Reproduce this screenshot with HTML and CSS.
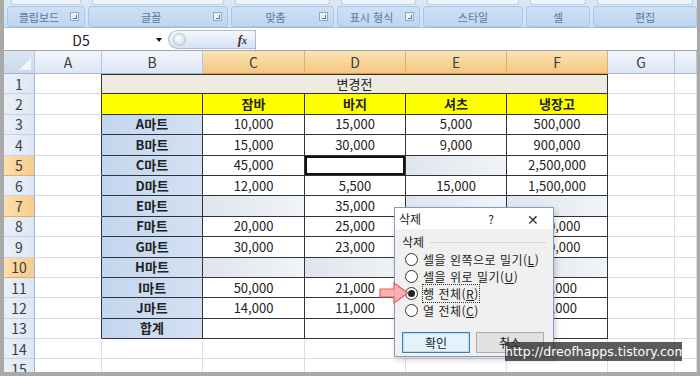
FILE: index.html
```html
<!DOCTYPE html>
<html lang="ko">
<head>
<meta charset="UTF-8">
<title>삭제 - 엑셀</title>
<link rel="stylesheet" href="styles.css">
</head>
<body>
<div class="window">
  <div class="ribbon">
    <div class="group g1"><div class="group-top"></div><div class="group-label"><span>클립보드</span><i class="launcher"></i></div></div>
    <div class="group g2"><div class="group-top"></div><div class="group-label"><span>글꼴</span><i class="launcher"></i></div></div>
    <div class="group g3"><div class="group-top"></div><div class="group-label"><span>맞춤</span><i class="launcher"></i></div></div>
    <div class="group g4"><div class="group-top"></div><div class="group-label"><span>표시 형식</span><i class="launcher"></i></div></div>
    <div class="group g5"><div class="group-top"></div><div class="group-label"><span>스타일</span></div></div>
    <div class="group g6"><div class="group-top"></div><div class="group-label"><span>셀</span></div></div>
    <div class="group g7"><div class="group-top"></div><div class="group-label"><span>편집</span></div></div>
  </div>

  <div class="formula-bar">
    <div class="name-box"><span>D5</span><i class="drop"></i></div>
    <div class="fx-box"><span class="knob"></span><span class="fx">f<small>x</small></span></div>
    <div class="formula-input"></div>
  </div>

  <table class="sheet">
    <colgroup>
      <col class="c-rh"><col class="c-a"><col class="c-b"><col class="c-c"><col class="c-d"><col class="c-e"><col class="c-f"><col class="c-g"><col>
    </colgroup>
    <thead>
      <tr>
        <th class="corner"><i></i></th>
        <th class="ch">A</th><th class="ch">B</th><th class="ch sel">C</th><th class="ch sel">D</th><th class="ch sel">E</th><th class="ch sel">F</th><th class="ch">G</th><th class="ch"></th>
      </tr>
    </thead>
    <tbody>
      <tr><th class="rh">1</th><td class="edge"></td><td class="t title" colspan="5">변경전</td><td></td><td></td></tr>
      <tr><th class="rh">2</th><td class="edge"></td><td class="t hd"></td><td class="t hd">잠바</td><td class="t hd">바지</td><td class="t hd">셔츠</td><td class="t hd">냉장고</td><td></td><td></td></tr>
      <tr><th class="rh">3</th><td class="edge"></td><td class="t lab">A마트</td><td class="t">10,000</td><td class="t">15,000</td><td class="t">5,000</td><td class="t">500,000</td><td></td><td></td></tr>
      <tr><th class="rh">4</th><td class="edge"></td><td class="t lab">B마트</td><td class="t">15,000</td><td class="t">30,000</td><td class="t">9,000</td><td class="t">900,000</td><td></td><td></td></tr>
      <tr><th class="rh sel">5</th><td class="edge"></td><td class="t lab">C마트</td><td class="t">45,000</td><td class="t active"></td><td class="t blank"></td><td class="t">2,500,000</td><td></td><td></td></tr>
      <tr><th class="rh">6</th><td class="edge"></td><td class="t lab">D마트</td><td class="t">12,000</td><td class="t">5,500</td><td class="t">15,000</td><td class="t">1,500,000</td><td></td><td></td></tr>
      <tr><th class="rh sel">7</th><td class="edge"></td><td class="t lab">E마트</td><td class="t blank"></td><td class="t">35,000</td><td class="t blank"></td><td class="t blank"></td><td></td><td></td></tr>
      <tr><th class="rh">8</th><td class="edge"></td><td class="t lab">F마트</td><td class="t">20,000</td><td class="t">25,000</td><td class="t"></td><td class="t">300,000</td><td></td><td></td></tr>
      <tr><th class="rh">9</th><td class="edge"></td><td class="t lab">G마트</td><td class="t">30,000</td><td class="t">23,000</td><td class="t"></td><td class="t">400,000</td><td></td><td></td></tr>
      <tr><th class="rh sel">10</th><td class="edge"></td><td class="t lab">H마트</td><td class="t blank"></td><td class="t blank"></td><td class="t blank"></td><td class="t blank"></td><td></td><td></td></tr>
      <tr><th class="rh">11</th><td class="edge"></td><td class="t lab">I마트</td><td class="t">50,000</td><td class="t">21,000</td><td class="t"></td><td class="t">70,000</td><td></td><td></td></tr>
      <tr><th class="rh">12</th><td class="edge"></td><td class="t lab">J마트</td><td class="t">14,000</td><td class="t">11,000</td><td class="t"></td><td class="t">80,000</td><td></td><td></td></tr>
      <tr><th class="rh">13</th><td class="edge"></td><td class="t lab">합계</td><td class="t"></td><td class="t"></td><td class="t"></td><td class="t"></td><td></td><td></td></tr>
      <tr><th class="rh">14</th><td></td><td></td><td></td><td></td><td></td><td></td><td></td><td></td></tr>
      <tr><th class="rh">15</th><td></td><td></td><td></td><td></td><td></td><td></td><td></td><td></td></tr>
    </tbody>
  </table>

  <div class="dialog">
    <div class="dlg-title">
      <span class="dlg-name">삭제</span>
      <span class="help">?</span>
      <span class="close">&#x2715;</span>
    </div>
    <div class="dlg-body">
      <div class="group-name"><span>삭제</span><i></i></div>
      <div class="opt"><span class="radio"></span>셀을 왼쪽으로 밀기(<u>L</u>)</div>
      <div class="opt"><span class="radio"></span>셀을 위로 밀기(<u>U</u>)</div>
      <div class="opt"><span class="radio on"></span><span class="focus">행 전체(<u>R</u>)</span></div>
      <div class="opt"><span class="radio"></span>열 전체(<u>C</u>)</div>
      <div class="buttons">
        <button class="btn primary">확인</button>
        <button class="btn">취소</button>
      </div>
    </div>
  </div>

  <!-- 화살표는 대화상자 위에 겹쳐 그림 -->
  <svg class="arrow" width="30" height="22" viewBox="0 0 30 22">
    <polygon points="1,7 15,7 15,1 29,11 15,21 15,15 1,15" fill="#f6aaa8" fill-opacity="0.9" stroke="#e2625f" stroke-width="1.2"/>
  </svg>

  <div class="watermark">http://dreofhapps.tistory.com</div>
</div>
</body>
</html>
```

FILE: styles.css
```css
body {
  margin: 0;
  background: #fff;
  font-family: "Noto Sans CJK KR", "Noto Sans", sans-serif;
  color: #222;
}

.window {
  position: relative;
  width: 700px;
  height: 376px;
  box-sizing: border-box;
  border: solid #a9a9a9;
  border-width: 0 3px 4px 4px;
  overflow: hidden;
  background: #fff;
}

/* ribbon group labels */
.ribbon {
  display: flex;
  gap: 3px;
  height: 28px;
  padding: 0 0 0 3px;
  box-sizing: border-box;
  background: linear-gradient(#dde8f6, #cfdff2);
  border-bottom: 1px solid #9fbbe0;
}

.group {
  display: flex;
  flex-direction: column;
}

.g1 { width: 78px; }
.g2 { width: 140px; }
.g3 { width: 103px; }
.g4 { width: 83px; }
.g5 { width: 100px; }
.g6 { width: 64px; }
.g7 { width: 104px; }

.group-top {
  height: 4px;
  margin: 0 4px;
  background: #eef4fb;
  border: 1px solid #bcd0e8;
  border-top: none;
  border-radius: 0 0 3px 3px;
}

.group-label {
  display: flex;
  align-items: center;
  height: 19px;
  margin-top: 1px;
  background: linear-gradient(#cfe0f4, #bfd5ee);
  border: 1px solid #adc6e5;
  border-radius: 3px;
  font-size: 11px;
  color: #58779f;
}

.group-label span {
  flex: 1;
  text-align: center;
}

.launcher {
  width: 7px;
  height: 7px;
  margin-right: 5px;
  border: 1px solid #8ea8cb;
  background: #e8f0fa;
  position: relative;
}

.launcher::after {
  content: "";
  position: absolute;
  right: 1px;
  bottom: 1px;
  width: 3px;
  height: 3px;
  border-right: 1px solid #56739d;
  border-bottom: 1px solid #56739d;
}

/* formula bar */
.formula-bar {
  display: flex;
  align-items: center;
  height: 23px;
  padding-top: 1px;
  box-sizing: border-box;
  border-bottom: 1px solid #a5a5a5;
  background: #fff;
}

.name-box {
  display: flex;
  align-items: center;
  width: 164px;
  height: 20px;
  font-size: 14px;
  color: #222;
}

.name-box span {
  flex: 1;
  text-align: center;
  padding-left: 2px;
}

.drop {
  width: 0;
  height: 0;
  margin-right: 6px;
  border-left: 3px solid transparent;
  border-right: 3px solid transparent;
  border-top: 4px solid #111;
}

.fx-box {
  display: flex;
  align-items: center;
  justify-content: space-between;
  width: 87px;
  height: 19px;
  box-sizing: border-box;
  border: 1px solid #a9bdd8;
  border-right: none;
  border-radius: 10px 0 0 10px;
  background: linear-gradient(#f4f8fd, #d5e2f2);
}

.knob {
  width: 11px;
  height: 11px;
  margin-left: 4px;
  border-radius: 50%;
  background: radial-gradient(circle at 40% 40%, #ffffff, #c4cfdc);
  border: 1px solid #b8c5d6;
}

.fx {
  margin-right: 8px;
  font-family: "Liberation Serif", serif;
  font-style: italic;
  font-weight: bold;
  font-size: 13px;
  color: #333;
}

.fx small {
  font-size: 10px;
}

.formula-input {
  flex: 1;
  height: 20px;
  border-left: 1px solid #a9bdd8;
}

/* sheet */
.sheet {
  table-layout: fixed;
  width: 693px;
  border-collapse: separate;
  border-spacing: 0;
  font-size: 13px;
}

.c-rh { width: 31px; }
.c-a { width: 67px; }
.c-b { width: 101px; }
.c-c { width: 102px; }
.c-d { width: 101px; }
.c-e { width: 101px; }
.c-f { width: 101px; }
.c-g { width: 67px; }

.sheet td,
.sheet th {
  height: 20.4px;
  padding: 0 2px;
  box-sizing: border-box;
  text-align: center;
  white-space: nowrap;
  overflow: hidden;
  border-right: 1px solid #dadde3;
  border-bottom: 1px solid #dadde3;
  line-height: 18px;
}

.sheet thead th {
  height: 23px;
  font-weight: normal;
  font-size: 14px;
  color: #3c3c3c;
  background: linear-gradient(#f0f5fb, #dde7f3);
  border-right: 1px solid #b5c7de;
  border-bottom: 1px solid #9fb4cf;
}

.sheet thead th.sel {
  background: linear-gradient(#fbe3b6, #f5c780);
  border-right-color: #e6ad62;
  border-bottom-color: #d89a4a;
}

.sheet th.corner {
  position: relative;
  background: linear-gradient(#dbe6f3, #c9d8ea);
}

.corner i {
  position: absolute;
  right: 3px;
  bottom: 3px;
  width: 0;
  height: 0;
  border-left: 12px solid transparent;
  border-bottom: 12px solid #f2f6fb;
}

.sheet th.rh {
  font-weight: normal;
  font-size: 14px;
  color: #3c3c3c;
  background: linear-gradient(90deg, #eaf0f8, #dde7f3);
  border-right: 1px solid #9fb4cf;
  border-bottom: 1px solid #c4d3e6;
}

.sheet th.rh.sel {
  background: linear-gradient(90deg, #fbe0ae, #f6cc8c);
  border-bottom-color: #e6ad62;
}

.sheet td.edge {
  border-right-color: #333;
}

.sheet td.t {
  border-right: 1px solid #333;
  border-bottom: 1px solid #333;
}

.sheet td.title {
  background: #eeece1;
  box-shadow: inset 0 1px 0 #333;
}

.sheet td.hd {
  background: #ffff00;
  font-weight: bold;
}

.sheet td.lab {
  background: linear-gradient(90deg, #c3d6ef, #d3e1f3);
  font-weight: bold;
}

.sheet td.blank {
  background: linear-gradient(90deg, #dfe5ee, #f1f4f8);
}

.sheet td.active {
  box-shadow: inset 0 0 0 2px #111;
}

/* overlay pieces */
.arrow {
  position: absolute;
  left: 375px;
  top: 282px;
}

.dialog {
  position: absolute;
  left: 390px;
  top: 207px;
  width: 160px;
  height: 150px;
  box-sizing: border-box;
  border: 1px solid #7f9cc2;
  background: #f0f0f0;
  box-shadow: 2px 3px 6px rgba(0, 0, 0, 0.18);
  font-size: 12px;
  color: #222;
}

.dlg-title {
  display: flex;
  align-items: center;
  height: 21px;
  padding: 0 0 0 4px;
  background: #fff;
}

.dlg-name {
  flex: 1;
}

.help {
  width: 20px;
  text-align: center;
  margin-right: 22px;
  font-size: 12px;
}

.close {
  width: 20px;
  margin-right: 10px;
  text-align: center;
  font-size: 14px;
  color: #333;
}

.dlg-body {
  padding: 4px 7px 0 7px;
}

.group-name {
  display: flex;
  align-items: center;
  height: 17px;
  margin-bottom: 1px;
}

.group-name i {
  flex: 1;
  margin-left: 6px;
  border-top: 1px solid #d5d5d5;
  margin-top: 2px;
}

.opt {
  display: flex;
  align-items: center;
  height: 17px;
  padding-left: 3px;
  letter-spacing: 0.5px;
}

.radio {
  position: relative;
  width: 11px;
  height: 11px;
  margin-right: 5px;
  border: 1px solid #333;
  border-radius: 50%;
  background: #fff;
}

.radio.on::after {
  content: "";
  position: absolute;
  left: 2px;
  top: 2px;
  width: 7px;
  height: 7px;
  border-radius: 50%;
  background: #222;
}

.focus {
  outline: 1px dotted #333;
  outline-offset: 0;
}

.buttons {
  display: flex;
  justify-content: space-between;
  margin-top: 13px;
  padding-right: 2px;
}

.btn {
  width: 68px;
  height: 21px;
  padding: 0;
  font-family: "Noto Sans CJK KR", sans-serif;
  font-size: 12px;
  color: #222;
  background: #e1e1e1;
  border: 1px solid #adadad;
}

.btn.primary {
  background: #e5f1fb;
  border: 1px solid #3c7fb1;
  box-shadow: inset 0 0 0 1px #bcdcf4;
}

.watermark {
  position: absolute;
  left: 501px;
  top: 342px;
  width: 177px;
  height: 19px;
  background: rgba(45, 45, 45, 0.78);
  color: #fff;
  font-family: "DejaVu Sans", sans-serif;
  font-size: 12.5px;
  line-height: 19px;
  text-align: center;
}
```
